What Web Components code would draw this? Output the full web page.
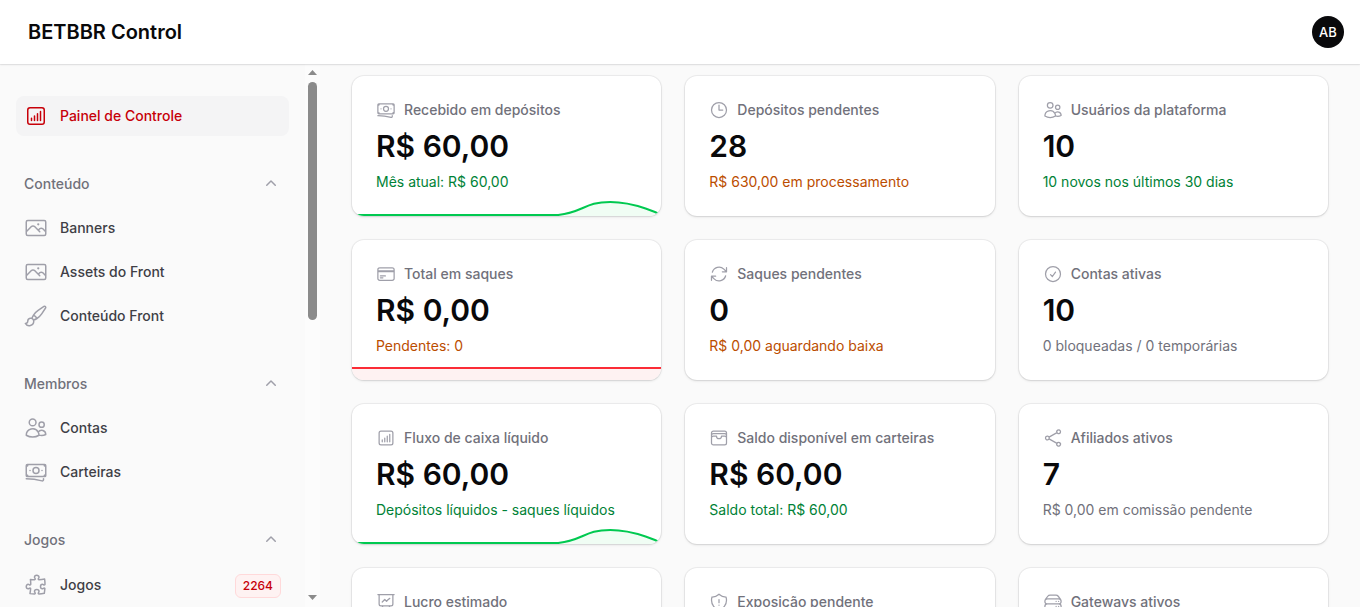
<!DOCTYPE html>
<html lang="pt-BR">
<head>
    <meta charset="UTF-8">
    <meta name="viewport" content="width=device-width, initial-scale=1">
    <title>BETBBR Control</title>
    <style>
        body {
            margin: 0;
            height: 100vh;
            overflow: hidden;
            background: #fafafa;
            color: #09090b;
            font-family: Inter, "Liberation Sans", sans-serif;
            font-size: 14px;
            line-height: 20px;
        }
    </style>
</head>
<body>
    <admin-layout>
        <top-bar slot="header" initials="AB">BETBBR Control</top-bar>

        <side-bar slot="sidebar">
            <nav-item icon="chart-bar-square" active>Painel de Controle</nav-item>
            <nav-group label="Conteúdo">
                <nav-item icon="photo">Banners</nav-item>
                <nav-item icon="photo">Assets do Front</nav-item>
                <nav-item icon="paint-brush">Conteúdo Front</nav-item>
            </nav-group>
            <nav-group label="Membros">
                <nav-item icon="users">Contas</nav-item>
                <nav-item icon="banknotes">Carteiras</nav-item>
            </nav-group>
            <nav-group label="Jogos">
                <nav-item icon="puzzle-piece" badge="2264">Jogos</nav-item>
            </nav-group>
        </side-bar>

        <stat-card icon="banknotes" label="Recebido em depósitos" value="R$ 60,00" color="success" chart="bump">Mês atual: R$ 60,00</stat-card>
        <stat-card icon="clock" label="Depósitos pendentes" value="28" color="warning">R$ 630,00 em processamento</stat-card>
        <stat-card icon="users" label="Usuários da plataforma" value="10" color="success">10 novos nos últimos 30 dias</stat-card>
        <stat-card icon="credit-card" label="Total em saques" value="R$ 0,00" color="warning" chart="flat">Pendentes: 0</stat-card>
        <stat-card icon="arrow-path" label="Saques pendentes" value="0" color="warning">R$ 0,00 aguardando baixa</stat-card>
        <stat-card icon="check-circle" label="Contas ativas" value="10">0 bloqueadas / 0 temporárias</stat-card>
        <stat-card icon="chart-bar-square" label="Fluxo de caixa líquido" value="R$ 60,00" color="success" chart="bump">Depósitos líquidos - saques líquidos</stat-card>
        <stat-card icon="wallet" label="Saldo disponível em carteiras" value="R$ 60,00" color="success">Saldo total: R$ 60,00</stat-card>
        <stat-card icon="share" label="Afiliados ativos" value="7">R$ 0,00 em comissão pendente</stat-card>
        <stat-card icon="presentation-chart-line" label="Lucro estimado"></stat-card>
        <stat-card icon="shield-exclamation" label="Exposição pendente"></stat-card>
        <stat-card icon="server-stack" label="Gateways ativos"></stat-card>
    </admin-layout>

    <script>
        const ICONS = {
            'banknotes': 'M2.25 18.75a60.07 60.07 0 0 1 15.797 2.101c.727.198 1.453-.342 1.453-1.096V18.75M3.75 4.5v.75A.75.75 0 0 1 3 6h-.75m0 0v-.375c0-.621.504-1.125 1.125-1.125H20.25M2.25 6v9m18-10.5v.75c0 .414.336.75.75.75h.75m-1.5-1.5h.375c.621 0 1.125.504 1.125 1.125v9.75c0 .621-.504 1.125-1.125 1.125h-.375m1.5-1.5H21a.75.75 0 0 0-.75.75v.75m0 0H3.75m0 0h-.375a1.125 1.125 0 0 1-1.125-1.125V15m1.5 1.5v-.75A.75.75 0 0 0 3 15h-.75M15 10.5a3 3 0 1 1-6 0 3 3 0 0 1 6 0Zm3 0h.008v.008H18V10.5Zm-12 0h.008v.008H6V10.5Z',
            'users': 'M15 19.128a9.38 9.38 0 0 0 2.625.372 9.337 9.337 0 0 0 4.121-.952 4.125 4.125 0 0 0-7.533-2.493M15 19.128v-.003c0-1.113-.285-2.16-.786-3.07M15 19.128v.106A12.318 12.318 0 0 1 8.624 21c-2.331 0-4.512-.645-6.374-1.766l-.001-.109a6.375 6.375 0 0 1 11.964-3.07M12 6.375a3.375 3.375 0 1 1-6.75 0 3.375 3.375 0 0 1 6.75 0Zm8.25 2.25a2.625 2.625 0 1 1-5.25 0 2.625 2.625 0 0 1 5.25 0Z',
            'photo': 'm2.25 15.75 5.159-5.159a2.25 2.25 0 0 1 3.182 0l5.159 5.159m-1.5-1.5 1.409-1.409a2.25 2.25 0 0 1 3.182 0l2.909 2.909m-18 3.75h16.5a1.5 1.5 0 0 0 1.5-1.5V6a1.5 1.5 0 0 0-1.5-1.5H3.75A1.5 1.5 0 0 0 2.25 6v12a1.5 1.5 0 0 0 1.5 1.5Zm10.5-11.25h.008v.008h-.008V8.25Zm.375 0a.375.375 0 1 1-.75 0 .375.375 0 0 1 .75 0Z',
            'paint-brush': 'M9.53 16.122a3 3 0 0 0-5.78 1.128 2.25 2.25 0 0 1-2.4 2.245 4.5 4.5 0 0 0 8.4-2.245c0-.399-.078-.78-.22-1.128Zm0 0a15.998 15.998 0 0 0 3.388-1.62m-5.043-.025a15.994 15.994 0 0 1 1.622-3.395m3.42 3.42a15.995 15.995 0 0 0 4.764-4.648l3.876-5.814a1.151 1.151 0 0 0-1.597-1.597L14.146 6.32a15.996 15.996 0 0 0-4.649 4.763m3.42 3.42a6.776 6.776 0 0 0-3.42-3.42',
            'puzzle-piece': 'M14.25 6.087c0-.355.186-.676.401-.959.221-.29.349-.634.349-1.003 0-1.036-1.007-1.875-2.25-1.875s-2.25.84-2.25 1.875c0 .369.128.713.349 1.003.215.283.401.604.401.959v0a.64.64 0 0 1-.657.643 48.39 48.39 0 0 1-4.163-.3c.186 1.613.293 3.25.315 4.907a.656.656 0 0 1-.658.663v0c-.355 0-.676-.186-.959-.401a1.647 1.647 0 0 0-1.003-.349c-1.036 0-1.875 1.007-1.875 2.25s.84 2.25 1.875 2.25c.369 0 .713-.128 1.003-.349.283-.215.604-.401.959-.401v0c.31 0 .555.26.532.57a48.039 48.039 0 0 1-.642 5.056c1.518.19 3.058.309 4.616.354a.64.64 0 0 0 .657-.643v0c0-.355-.186-.676-.401-.959a1.647 1.647 0 0 1-.349-1.003c0-1.035 1.008-1.875 2.25-1.875 1.243 0 2.25.84 2.25 1.875 0 .369-.128.713-.349 1.003-.215.283-.4.604-.4.959v0c0 .333.277.599.61.58a48.1 48.1 0 0 0 5.427-.63 48.05 48.05 0 0 0 .582-4.717.532.532 0 0 0-.533-.57v0c-.355 0-.676.186-.959.401-.29.221-.634.349-1.003.349-1.035 0-1.875-1.007-1.875-2.25s.84-2.25 1.875-2.25c.37 0 .713.128 1.003.349.283.215.604.401.96.401v0a.656.656 0 0 0 .658-.663 48.422 48.422 0 0 0-.37-5.36c-1.886.342-3.81.574-5.766.689a.578.578 0 0 1-.61-.58v0Z',
            'chart-bar-square': 'M7.5 14.25v2.25m3-4.5v4.5m3-6.75v6.75m3-9v9M6 20.25h12A2.25 2.25 0 0 0 20.25 18V6A2.25 2.25 0 0 0 18 3.75H6A2.25 2.25 0 0 0 3.75 6v12A2.25 2.25 0 0 0 6 20.25Z',
            'credit-card': 'M2.25 8.25h19.5M2.25 9h19.5m-16.5 5.25h6m-6 2.25h3m-3.75 3h15a2.25 2.25 0 0 0 2.25-2.25V6.75A2.25 2.25 0 0 0 19.5 4.5h-15a2.25 2.25 0 0 0-2.25 2.25v10.5A2.25 2.25 0 0 0 4.5 19.5Z',
            'clock': 'M12 6v6h4.5m4.5 0a9 9 0 1 1-18 0 9 9 0 0 1 18 0Z',
            'arrow-path': 'M16.023 9.348h4.992v-.001M2.985 19.644v-4.992m0 0h4.992m-4.993 0 3.181 3.183a8.25 8.25 0 0 0 13.803-3.7M4.031 9.865a8.25 8.25 0 0 1 13.803-3.7l3.181 3.182m0-4.991v4.99',
            'check-circle': 'M9 12.75 11.25 15 15 9.75M21 12a9 9 0 1 1-18 0 9 9 0 0 1 18 0Z',
            'share': 'M7.217 10.907a2.25 2.25 0 1 0 0 2.186m0-2.186c.18.324.283.696.283 1.093s-.103.77-.283 1.093m0-2.186 9.566-5.314m-9.566 7.5 9.566 5.314m0 0a2.25 2.25 0 1 0 3.935 2.186 2.25 2.25 0 0 0-3.935-2.186Zm0-12.814a2.25 2.25 0 1 0 3.933-2.185 2.25 2.25 0 0 0-3.933 2.185Z',
            'wallet': 'M21 12a2.25 2.25 0 0 0-2.25-2.25H15a3 3 0 1 1-6 0H5.25A2.25 2.25 0 0 0 3 12m18 0v6a2.25 2.25 0 0 1-2.25 2.25H5.25A2.25 2.25 0 0 1 3 18v-6m18 0V9M3 12V9m18 0a2.25 2.25 0 0 0-2.25-2.25H5.25A2.25 2.25 0 0 0 3 9m18 0V6a2.25 2.25 0 0 0-2.25-2.25H5.25A2.25 2.25 0 0 0 3 6v3',
            'presentation-chart-line': 'M3.75 3v11.25A2.25 2.25 0 0 0 6 16.5h2.25M3.75 3h-1.5m1.5 0h16.5m0 0h1.5m-1.5 0v11.25A2.25 2.25 0 0 1 18 16.5h-2.25m-7.5 0h7.5m-7.5 0-1 3m8.5-3 1 3m0 0 .5 1.5m-.5-1.5h-9.5m0 0-.5 1.5m.75-9 3-3 2.148 2.148A12.061 12.061 0 0 1 16.5 7.605',
            'shield-exclamation': 'M12 9v3.75m0-10.036A11.959 11.959 0 0 1 3.598 6 11.99 11.99 0 0 0 3 9.75c0 5.592 3.824 10.29 9 11.622 5.176-1.332 9-6.03 9-11.622 0-1.31-.21-2.57-.598-3.75h-.152c-3.196 0-6.1-1.25-8.25-3.286Zm0 13.036h.008v.008H12v-.008Z',
            'server-stack': 'M5.25 14.25h13.5m-13.5 0a3 3 0 0 1-3-3m3 3a3 3 0 1 0 0 6h13.5a3 3 0 1 0 0-6m-16.5-3a3 3 0 0 1 3-3h13.5a3 3 0 0 1 3 3m-19.5 0a4.5 4.5 0 0 1 .9-2.7L5.737 5.1a3.375 3.375 0 0 1 2.7-1.35h7.126c1.062 0 2.062.5 2.7 1.35l2.587 3.45a4.5 4.5 0 0 1 .9 2.7m0 0a3 3 0 0 1-3 3m0 3h.008v.008h-.008v-.008Zm0-6h.008v.008h-.008v-.008Zm-3 6h.008v.008h-.008v-.008Zm0-6h.008v.008h-.008v-.008Z'
        };

        // line and area of the small charts, in a 309x24 box
        const CHARTS = {
            bump: { line: 'M0 23H206C232 20 232 10 258 10C284 10 309 23 309 23', stroke: '#00c950', fill: '#f0fdf4' },
            flat: { line: 'M0 12H309', stroke: '#fb2c36', fill: '#fef2f2' }
        };

        class HeroIcon extends HTMLElement {
            connectedCallback() {
                this.attachShadow({ mode: 'open' }).innerHTML = `
                    <style>
                        :host {
                            display: block;
                            flex: none;
                            width: 24px;
                            height: 24px;
                            color: #9f9fa9;
                        }
                        svg { display: block; width: 100%; height: 100%; }
                    </style>
                    <svg viewBox="0 0 24 24" fill="none" stroke="currentColor" stroke-width="1.5"
                        stroke-linecap="round" stroke-linejoin="round" aria-hidden="true">
                        <path d="${ICONS[this.getAttribute('name')]}"/>
                    </svg>
                `;
            }
        }

        class AdminLayout extends HTMLElement {
            connectedCallback() {
                this.attachShadow({ mode: 'open' }).innerHTML = `
                    <style>
                        :host {
                            display: flex;
                            flex-direction: column;
                            height: 100%;
                        }
                        .body {
                            display: flex;
                            flex: 1;
                            min-height: 0;
                        }
                        main {
                            flex: 1;
                            min-width: 0;
                            overflow: hidden;
                            padding: 12px 32px 0;
                        }
                        .grid {
                            display: grid;
                            grid-template-columns: repeat(3, minmax(0, 1fr));
                            gap: 24px;
                        }
                    </style>
                    <slot name="header"></slot>
                    <div class="body">
                        <slot name="sidebar"></slot>
                        <main><div class="grid"><slot></slot></div></main>
                    </div>
                `;
            }
        }

        class TopBar extends HTMLElement {
            connectedCallback() {
                this.attachShadow({ mode: 'open' }).innerHTML = `
                    <style>
                        :host {
                            display: block;
                            position: relative;
                            z-index: 1;
                            background: white;
                            box-shadow: 0 0 0 1px rgba(9, 9, 11, 0.05), 0 1px 2px rgba(0, 0, 0, 0.08);
                        }
                        header {
                            display: flex;
                            align-items: center;
                            justify-content: space-between;
                            height: 64px;
                            padding: 0 16px 0 28px;
                        }
                        a {
                            color: inherit;
                            font-size: 20px;
                            line-height: 20px;
                            font-weight: 600;
                            text-decoration: none;
                        }
                        button {
                            width: 32px;
                            height: 32px;
                            padding: 0;
                            border: none;
                            border-radius: 50%;
                            background: #09090b;
                            color: white;
                            font: 500 13px Inter, sans-serif;
                            cursor: pointer;
                        }
                    </style>
                    <header>
                        <a href="#"><slot></slot></a>
                        <button type="button">${this.getAttribute('initials')}</button>
                    </header>
                `;
            }
        }

        class SideBar extends HTMLElement {
            connectedCallback() {
                this.attachShadow({ mode: 'open' }).innerHTML = `
                    <style>
                        :host {
                            display: flex;
                            flex: none;
                            width: 320px;
                            overflow: hidden;
                        }
                        nav {
                            display: flex;
                            flex: 1;
                            flex-direction: column;
                            gap: 28px;
                            padding: 32px 16px;
                        }
                        .scroll {
                            display: flex;
                            flex-direction: column;
                            gap: 7px;
                            padding: 6px 3px 7px;
                            background: #fcfcfc;
                        }
                        .scroll svg { display: block; width: 9px; height: 5px; fill: #8b8b8b; }
                        .track { flex: 1; }
                        .thumb {
                            width: 9px;
                            height: 47%;
                            border-radius: 5px;
                            background: #8b8b8b;
                        }
                    </style>
                    <nav><slot></slot></nav>
                    <div class="scroll" aria-hidden="true">
                        <svg viewBox="0 0 9 5"><path d="M4.5 0 9 5H0Z"/></svg>
                        <div class="track"><div class="thumb"></div></div>
                        <svg viewBox="0 0 9 5"><path d="M0 0h9L4.5 5Z"/></svg>
                    </div>
                `;
            }
        }

        class NavGroup extends HTMLElement {
            connectedCallback() {
                this.attachShadow({ mode: 'open' }).innerHTML = `
                    <style>
                        :host {
                            display: flex;
                            flex-direction: column;
                            gap: 4px;
                        }
                        button {
                            display: flex;
                            align-items: center;
                            justify-content: space-between;
                            padding: 10px 8px;
                            border: none;
                            background: none;
                            color: #71717b;
                            font: inherit;
                            font-weight: 500;
                            cursor: pointer;
                        }
                        svg { width: 20px; height: 20px; fill: #9f9fa9; }
                        .items {
                            display: flex;
                            flex-direction: column;
                            gap: 4px;
                        }
                        .items[hidden] { display: none; }
                    </style>
                    <button type="button" aria-expanded="true">
                        ${this.getAttribute('label')}
                        <svg viewBox="0 0 20 20" aria-hidden="true"><path d="M9.47 6.47a.75.75 0 0 1 1.06 0l4.25 4.25a.75.75 0 1 1-1.06 1.06L10 8.06l-3.72 3.72a.75.75 0 0 1-1.06-1.06l4.25-4.25Z"/></svg>
                    </button>
                    <div class="items"><slot></slot></div>
                `;
                const button = this.shadowRoot.querySelector('button');
                const items = this.shadowRoot.querySelector('.items');
                button.addEventListener('click', () => {
                    items.hidden = !items.hidden;
                    button.setAttribute('aria-expanded', String(!items.hidden));
                });
            }
        }

        class NavItem extends HTMLElement {
            connectedCallback() {
                const badge = this.getAttribute('badge');
                this.attachShadow({ mode: 'open' }).innerHTML = `
                    <style>
                        :host { display: block; }
                        a {
                            display: flex;
                            align-items: center;
                            gap: 12px;
                            padding: 8px;
                            border-radius: 8px;
                            color: #3f3f46;
                            font-weight: 500;
                            text-decoration: none;
                        }
                        .label { flex: 1; }
                        .badge { padding-top: 2px; }
                        .badge span {
                            display: block;
                            padding: 3px 7px;
                            border: 1px solid #ffd9da;
                            border-radius: 6px;
                            background: #fef2f2;
                            color: #c70009;
                            font-size: 12px;
                            line-height: 16px;
                        }
                        :host([active]) a { background: #f4f4f5; color: #c70009; }
                        :host([active]) hero-icon { color: #c70009; }
                    </style>
                    <a href="#">
                        <hero-icon name="${this.getAttribute('icon')}"></hero-icon>
                        <span class="label"><slot></slot></span>
                        ${badge ? `<div class="badge"><span>${badge}</span></div>` : ''}
                    </a>
                `;
            }
        }

        class StatCard extends HTMLElement {
            connectedCallback() {
                this.attachShadow({ mode: 'open' }).innerHTML = `
                    <style>
                        :host {
                            display: flex;
                            flex-direction: column;
                            gap: 8px;
                            position: relative;
                            overflow: hidden;
                            padding: 24px;
                            border-radius: 12px;
                            background: white;
                            box-shadow: 0 0 0 1px rgba(9, 9, 11, 0.05), 0 1px 3px rgba(0, 0, 0, 0.1), 0 1px 2px -1px rgba(0, 0, 0, 0.1);
                        }
                        .label {
                            display: flex;
                            align-items: center;
                            gap: 8px;
                            color: #71717b;
                            font-weight: 500;
                        }
                        .label hero-icon { width: 20px; height: 20px; }
                        .value {
                            min-height: 36px;
                            font-size: 30px;
                            line-height: 36px;
                            font-weight: 600;
                        }
                        .description { min-height: 20px; color: #71717b; }
                        :host([color="success"]) .description { color: #008236; }
                        :host([color="warning"]) .description { color: #bb4d00; }
                        .chart {
                            position: absolute;
                            left: 0;
                            bottom: 0;
                            width: 100%;
                            height: 24px;
                        }
                    </style>
                    <div class="label">
                        <hero-icon name="${this.getAttribute('icon')}"></hero-icon>
                        <span>${this.getAttribute('label')}</span>
                    </div>
                    <div class="value">${this.getAttribute('value') || ''}</div>
                    <div class="description"><slot></slot></div>
                    ${this.renderChart()}
                `;
            }

            renderChart() {
                const chart = CHARTS[this.getAttribute('chart')];
                if (!chart) return '';
                return `
                    <svg class="chart" viewBox="0 0 309 24" preserveAspectRatio="none" aria-hidden="true">
                        <path d="${chart.line}V24H0Z" fill="${chart.fill}"/>
                        <path d="${chart.line}" fill="none" stroke="${chart.stroke}" stroke-width="2" vector-effect="non-scaling-stroke"/>
                    </svg>
                `;
            }
        }

        customElements.define('hero-icon', HeroIcon);
        customElements.define('admin-layout', AdminLayout);
        customElements.define('top-bar', TopBar);
        customElements.define('side-bar', SideBar);
        customElements.define('nav-group', NavGroup);
        customElements.define('nav-item', NavItem);
        customElements.define('stat-card', StatCard);
    </script>
</body>
</html>
